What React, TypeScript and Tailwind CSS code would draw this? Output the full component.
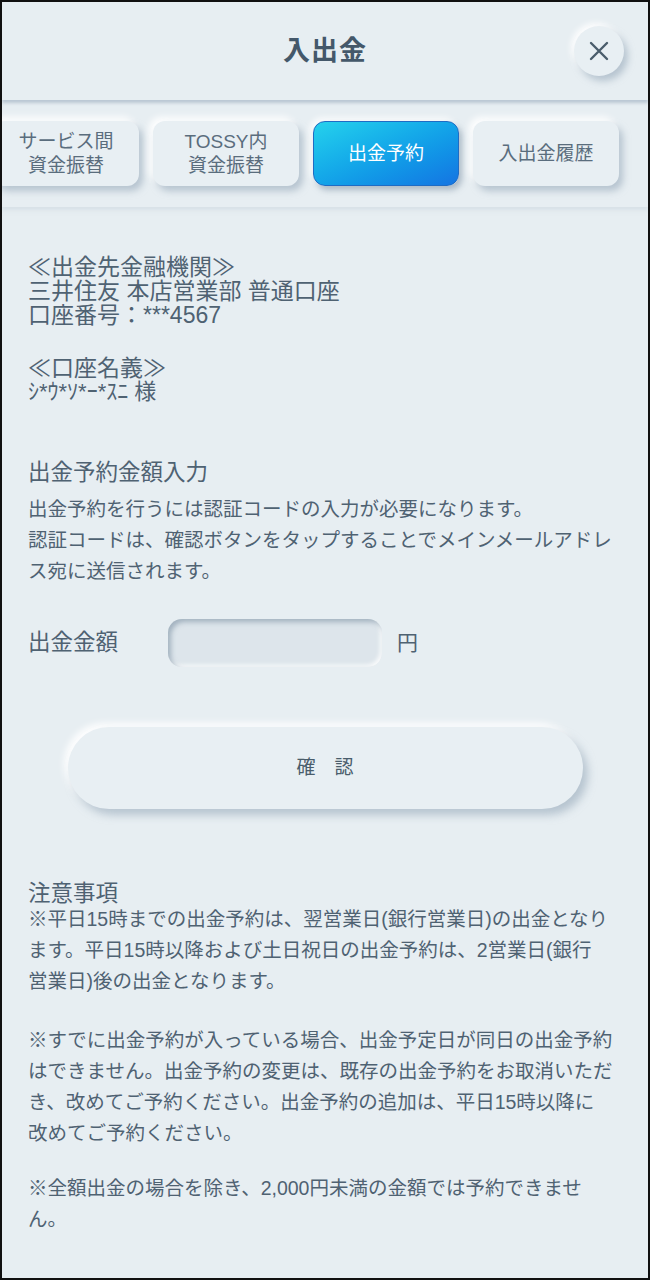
import React from "react";

const FONT = { fontFamily: '"Liberation Sans", "Noto Sans CJK JP", sans-serif' };

function Tab({ children, active = false, first = false }: { children: React.ReactNode; active?: boolean; first?: boolean }) {
  return (
    <div
      className={
        "shrink-0 w-[146px] h-[65px] rounded-[12px] flex items-center justify-center text-center text-[19px] leading-[24px] " +
        (first ? "-ml-[9px] " : "") +
        (active
          ? "text-white bg-gradient-to-br from-[#26d2ec] to-[#1674e2] border border-[#1f6cc4] shadow-[3px_4px_6px_rgba(120,140,160,0.55),-3px_-3px_6px_rgba(255,255,255,0.9)]"
          : "text-[#5a6d7d] bg-[#e8eff3] shadow-[4px_5px_7px_rgba(150,168,185,0.6),-4px_-4px_7px_rgba(255,255,255,0.95)]")
      }
    >
      {children}
    </div>
  );
}

export default function App() {
  return (
    <div style={FONT} className="w-[650px] h-[1280px] overflow-hidden bg-[#e7eef2] border-2 border-[#111] text-[#4f6272]">
      {/* Header */}
      <div className="relative h-[98px] flex items-center justify-center bg-[#e7eef2] shadow-[0_3px_3px_rgba(150,168,185,0.55)] z-10">
        <div className="text-[27px] font-bold text-[#44586a] tracking-[1px]">入出金</div>
        <div className="absolute right-[24px] top-[24px] w-[50px] h-[50px] rounded-full bg-[#e8eff3] flex items-center justify-center shadow-[4px_5px_7px_rgba(150,168,185,0.6),-3px_-3px_6px_rgba(255,255,255,0.95)]">
          <svg width="22" height="22" viewBox="0 0 22 22" fill="none" stroke="#4a5d6b" strokeWidth="2.4" strokeLinecap="round">
            <path d="M3 3 L19 19 M19 3 L3 19" />
          </svg>
        </div>
      </div>

      {/* Tabs */}
      <div className="relative h-[107px] overflow-hidden bg-[#e7eef2] shadow-[0_3px_4px_rgba(200,212,222,0.5)]">
        <div className="flex gap-[14px] pt-[21px] pb-[21px]">
          <Tab first>
            サービス間
            <br />
            資金振替
          </Tab>
          <Tab>
            TOSSY内
            <br />
            資金振替
          </Tab>
          <Tab active>出金予約</Tab>
          <Tab>入出金履歴</Tab>
        </div>
      </div>

      {/* Content */}
      <div className="pl-[26px] pr-[24px] pt-[48px]">
        <div className="text-[23px] leading-[24px]">
          <div>≪出金先金融機関≫</div>
          <div>三井住友 本店営業部 普通口座</div>
          <div>口座番号：***4567</div>
        </div>
        <div className="mt-[29px]">
          <div className="text-[23px] leading-[24px]">≪口座名義≫</div>
          <div className="text-[22px] leading-[24px]">ｼ*ｳ*ｿ*ｰ*ｽﾆ 様</div>
        </div>

        <div className="mt-[57px] text-[22.5px] leading-[24px]">出金予約金額入力</div>
        <div className="mt-[9px] text-[19.5px] leading-[31px] whitespace-nowrap">
          出金予約を行うには認証コードの入力が必要になります。
          <br />
          認証コードは、確認ボタンをタップすることでメインメールアドレ
          <br />
          ス宛に送信されます。
        </div>

        <div className="mt-[32px] flex items-center h-[48px]">
          <div className="w-[140px] text-[22.5px]">出金金額</div>
          <div className="w-[214px] h-[48px] rounded-[14px] bg-[#dde5eb] shadow-[inset_3px_3px_5px_rgba(130,150,168,0.65),inset_-2px_-2px_4px_rgba(255,255,255,0.9)]" />
          <div className="ml-[15px] text-[21px]">円</div>
        </div>

        <div className="mt-[60px] flex justify-center">
          <div className="ml-[-2px] w-[515px] h-[82px] rounded-full bg-[#e8eff3] flex items-center justify-center text-[19px] text-[#4a5d6b] shadow-[5px_6px_8px_rgba(150,168,185,0.6),-4px_-4px_7px_rgba(255,255,255,0.95)]">
            確　認
          </div>
        </div>

        <div className="mt-[73px] text-[22.5px] leading-[24px]">注意事項</div>
        <div className="mt-[-2px] text-[19.5px] leading-[31px] whitespace-nowrap">
          <div>
            ※平日15時までの出金予約は、翌営業日(銀行営業日)の出金となり
            <br />
            ます。平日15時以降および土日祝日の出金予約は、2営業日(銀行
            <br />
            営業日)後の出金となります。
          </div>
          <div className="mt-[28px]">
            ※すでに出金予約が入っている場合、出金予定日が同日の出金予約
            <br />
            はできません。出金予約の変更は、既存の出金予約をお取消いただ
            <br />
            き、改めてご予約ください。出金予約の追加は、平日15時以降に
            <br />
            改めてご予約ください。
          </div>
          <div className="mt-[24px]">
            ※全額出金の場合を除き、2,000円未満の金額では予約できませ
            <br />
            ん。
          </div>
        </div>
      </div>
    </div>
  );
}
